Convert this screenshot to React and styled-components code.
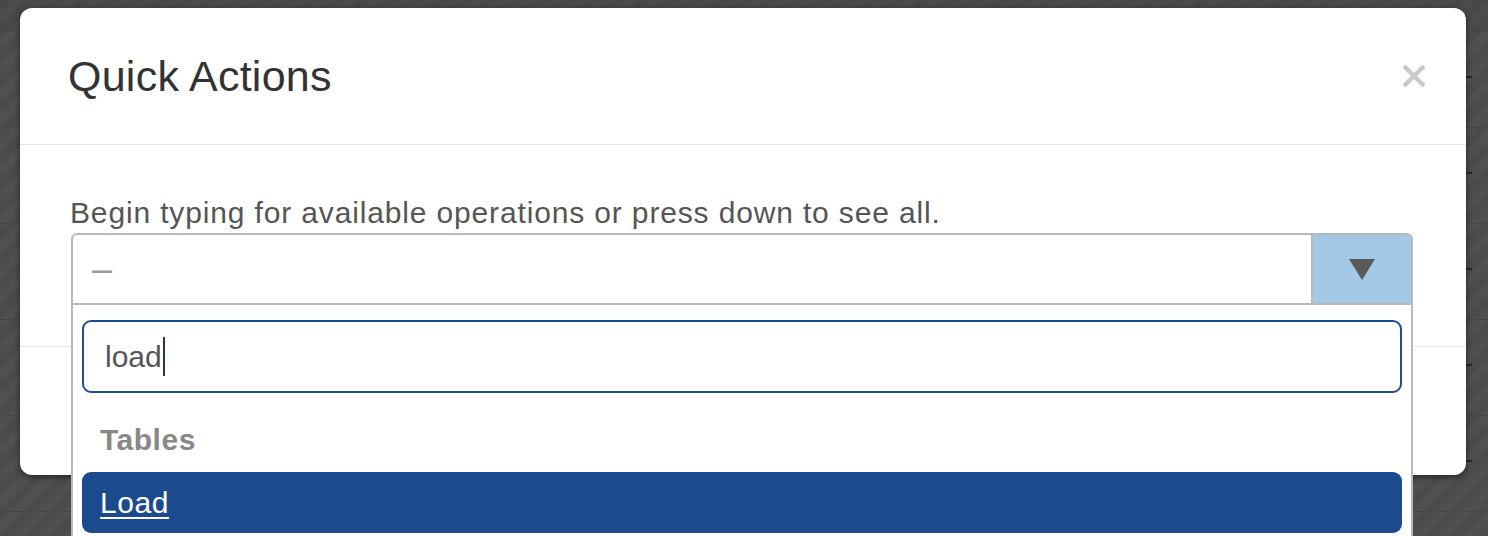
import React from 'react';
import styled, { createGlobalStyle } from 'styled-components';

const Global = createGlobalStyle`
  html, body { margin: 0; padding: 0; }
  body {
    width: 1488px;
    height: 536px;
    overflow: hidden;
    background: #4a4a4a;
    font-family: "Liberation Sans", Arial, Helvetica, sans-serif;
  }
  * { box-sizing: border-box; }
`;

const Page = styled.div`
  position: relative;
  width: 1488px;
  height: 536px;
  overflow: hidden;
  background: repeating-linear-gradient(
    135deg,
    #4b4b4b 0px,
    #4b4b4b 9px,
    #505050 9px,
    #505050 18px
  );
`;

const BackTable = styled.div`
  display: flex;
  flex-direction: column;
`;

const BackHead = styled.div`
  height: 32px;
  border-bottom: 1px solid #464646;
  background: rgba(0, 0, 0, 0.04);
`;

const BackRow = styled.div`
  height: 96px;
  border-bottom: 1px solid #464646;
  display: flex;
  justify-content: flex-end;
  align-items: flex-start;
  padding: 44px 16px 0 0;
`;

const Dash = styled.span`
  width: 6px;
  height: 2px;
  background: #262626;
`;

const Modal = styled.div`
  position: absolute;
  left: 20px;
  top: 8px;
  width: 1446px;
  height: 467px;
  background: #fff;
  border-radius: 12px;
  box-shadow: 0 2px 6px rgba(0, 0, 0, 0.55);
  display: flex;
  flex-direction: column;
`;

const Header = styled.div`
  height: 137px;
  flex: none;
  display: flex;
  align-items: center;
  justify-content: space-between;
  padding: 0 41px 0 48px;
  border-bottom: 1px solid #e5e5e5;
`;

const Title = styled.h4`
  margin: 0;
  font-size: 43px;
  line-height: 47px;
  font-weight: 400;
  color: #333;
  letter-spacing: 0.25px;
  padding-top: 1px;
`;

const Close = styled.button`
  border: 0;
  background: none;
  padding: 0;
  width: 22px;
  height: 22px;
  display: flex;
  cursor: pointer;
`;

const Body = styled.div`
  flex: none;
  padding: 50px 53px 41px 51px;
  border-bottom: 1px solid #e5e5e5;
`;

const Label = styled.div`
  font-size: 30px;
  line-height: 36px;
  color: #555;
  letter-spacing: 0.85px;
  margin-left: -1px;
  margin-bottom: 2px;
`;

const SelectWrap = styled.div`
  position: relative;
`;

const SelectBox = styled.div`
  height: 72px;
  border: 2px solid #b9b9b9;
  border-radius: 6px 6px 0 0;
  display: flex;
  overflow: hidden;
`;

const SelectValue = styled.div`
  flex: 1;
  display: flex;
  align-items: center;
  padding-left: 19px;
  font-size: 36px;
  color: #9a9a9a;
`;

const ArrowBox = styled.div`
  width: 100px;
  border-left: 2px solid #b9b9b9;
  background: #a3c9e6;
  display: flex;
  align-items: center;
  justify-content: center;
`;

const Dropdown = styled.div`
  position: absolute;
  left: 0;
  right: 0;
  top: 100%;
  height: 240px;
  background: #fff;
  border-left: 2px solid #b9b9b9;
  border-right: 2px solid #b9b9b9;
  padding: 15px 9px 0 9px;
  display: flex;
  flex-direction: column;
`;

const Search = styled.div`
  height: 73px;
  border: 2px solid #1f4c91;
  border-radius: 9px;
  display: flex;
  align-items: center;
  padding-left: 21px;
  font-size: 30px;
  color: #555;
`;

const Caret = styled.span`
  display: inline-block;
  width: 2px;
  height: 39px;
  background: #333;
  margin-left: 1px;
`;

const GroupLabel = styled.div`
  margin-top: 29px;
  padding-left: 18px;
  font-size: 30px;
  line-height: 36px;
  font-weight: 700;
  letter-spacing: 0.5px;
  color: #888;
`;

const Option = styled.div`
  margin-top: 14px;
  height: 61px;
  border-radius: 9px;
  background: ${(p) => (p.$active ? '#1c4a8f' : 'transparent')};
  color: ${(p) => (p.$active ? '#fff' : '#333')};
  display: flex;
  align-items: center;
  padding-left: 18px;
  font-size: 30px;
  letter-spacing: 0.6px;
  text-decoration: ${(p) => (p.$active ? 'underline' : 'none')};
  text-decoration-thickness: 2px;
  text-underline-offset: 4px;
`;

export default function App() {
  return (
    <>
      <Global />
      <Page>
        <BackTable>
          <BackHead />
          {[0, 1, 2, 3, 4, 5].map((i) => (
            <BackRow key={i}>
              <Dash />
            </BackRow>
          ))}
        </BackTable>
        <Modal>
          <Header>
            <Title>Quick Actions</Title>
            <Close aria-label="Close">
              <svg width="22" height="22" viewBox="0 0 22 22">
                <path d="M2.5 2.5 L19.5 19.5 M19.5 2.5 L2.5 19.5" stroke="#c9c9c9" strokeWidth="4.4" strokeLinecap="square" />
              </svg>
            </Close>
          </Header>
          <Body>
            <Label>Begin typing for available operations or press down to see all.</Label>
            <SelectWrap>
              <SelectBox>
                <SelectValue>–</SelectValue>
                <ArrowBox>
                  <svg width="26" height="21" viewBox="0 0 26 21">
                    <path d="M0 0 H26 L13 21 Z" fill="#5a5a5a" />
                  </svg>
                </ArrowBox>
              </SelectBox>
              <Dropdown>
                <Search>
                  load<Caret />
                </Search>
                <GroupLabel>Tables</GroupLabel>
                <Option $active>Load</Option>
              </Dropdown>
            </SelectWrap>
          </Body>
        </Modal>
      </Page>
    </>
  );
}
